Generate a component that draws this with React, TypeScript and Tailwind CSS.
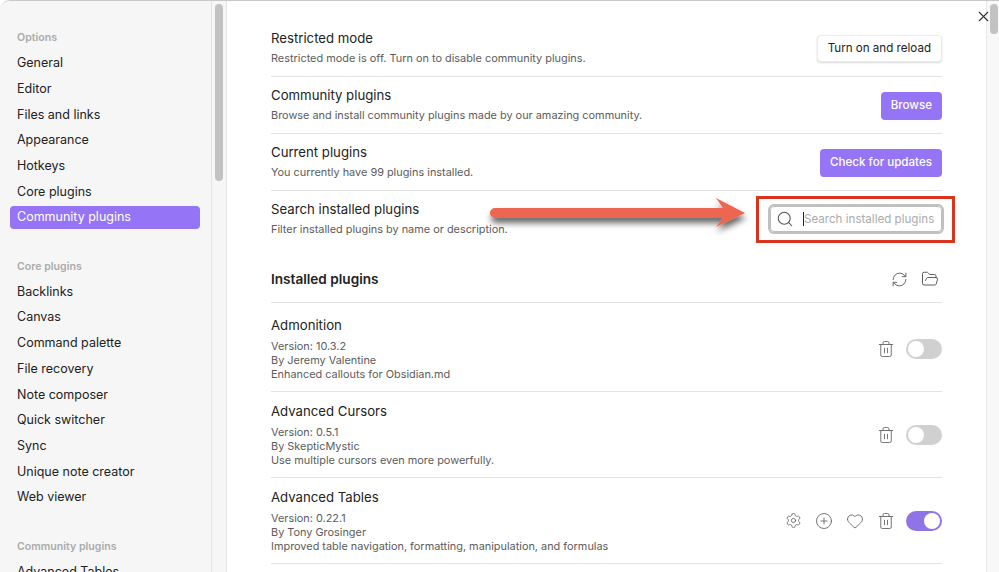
import React from 'react';
import { X, Search, RefreshCw, FolderOpen, Trash2, Settings, CirclePlus, Heart } from 'lucide-react';

const navGroups = [
  { title: 'Options', items: ['General', 'Editor', 'Files and links', 'Appearance', 'Hotkeys', 'Core plugins', 'Community plugins'] },
  { title: 'Core plugins', items: ['Backlinks', 'Canvas', 'Command palette', 'File recovery', 'Note composer', 'Quick switcher', 'Sync', 'Unique note creator', 'Web viewer'] },
  { title: 'Community plugins', items: ['Advanced Tables'] },
];

const plugins = [
  { name: 'Admonition', version: '10.3.2', author: 'Jeremy Valentine', desc: 'Enhanced callouts for Obsidian.md', on: false },
  { name: 'Advanced Cursors', version: '0.5.1', author: 'SkepticMystic', desc: 'Use multiple cursors even more powerfully.', on: false },
  { name: 'Advanced Tables', version: '0.22.1', author: 'Tony Grosinger', desc: 'Improved table navigation, formatting, manipulation, and formulas', on: true },
];

const Toggle = ({ on }: { on: boolean }) => (
  <div className={`w-[36px] h-[20px] rounded-full flex items-center px-[2px] ${on ? 'bg-[#8f74e8] justify-end' : 'bg-[#d0d0d0] justify-start'}`}>
    <div className="w-[16px] h-[16px] rounded-full bg-white" />
  </div>
);

const SettingRow = ({ title, desc, children }: { title: string; desc: string; children: React.ReactNode }) => (
  <div className="h-[57px] border-b border-[#e3e3e3] flex items-center justify-between">
    <div className="mb-[2px]">
      <div className="text-[13.2px] leading-[20px] text-[#222]">{title}</div>
      <div className="text-[10.9px] leading-[16px] mt-[2px] text-[#5c5c5c]">{desc}</div>
    </div>
    {children}
  </div>
);

const PurpleButton = ({ label }: { label: string }) => (
  <button className="h-[28px] mt-[1px] pt-[1px] px-[10px] rounded-[4px] bg-[#9575f5] text-white text-[11.6px] font-medium">{label}</button>
);

export default function App() {
  return (
    <div className="relative flex w-[999px] h-[572px] overflow-hidden bg-white border-t border-[#c8c8c8] rounded-tl-[10px] text-[#222] font-['Inter','Liberation_Sans',sans-serif]">
      {/* sidebar */}
      <div className="w-[212px] shrink-0 bg-[#f6f6f6] border-r border-[#e3e3e3] pt-[27px] pl-[10px] pr-[11px]">
        {navGroups.map((g) => (
          <div key={g.title} className="mb-[27.5px]">
            <div className="h-[20px] pl-[7px] flex items-center text-[10.6px] font-semibold text-[#ababab]">{g.title}</div>
            <div className="mt-[4px]">
              {g.items.map((it) => (
                <div
                  key={it}
                  className={`h-[23px] mb-[2.7px] pl-[7px] flex items-center rounded-[4px] text-[12.5px] ${it === 'Community plugins' && g.title === 'Options' ? 'bg-[#9575f5] text-white' : 'text-[#222]'}`}
                >
                  {it}
                </div>
              ))}
            </div>
          </div>
        ))}
      </div>
      {/* sidebar scrollbar */}
      <div className="w-[15px] shrink-0 bg-[#f6f6f6] border-r border-[#e3e3e3] pl-[3px] pt-[3px]">
        <div className="w-[8px] h-[177px] rounded-full bg-[#c2c2c2]" />
      </div>

      {/* main */}
      <div className="flex-1 pl-[44px] pr-[44px] pt-[19px]">
        <SettingRow title="Restricted mode" desc="Restricted mode is off. Turn on to disable community plugins.">
          <button className="h-[27px] pt-[1px] px-[10px] rounded-[4px] bg-white border border-[#ececec] shadow-[0_1px_2px_rgba(0,0,0,0.15)] text-[11.6px] text-[#222]">Turn on and reload</button>
        </SettingRow>
        <SettingRow title="Community plugins" desc="Browse and install community plugins made by our amazing community.">
          <PurpleButton label="Browse" />
        </SettingRow>
        <SettingRow title="Current plugins" desc="You currently have 99 plugins installed.">
          <PurpleButton label="Check for updates" />
        </SettingRow>
        <div className="h-[56px] flex items-center justify-between">
          <div className="mb-[2px]">
            <div className="text-[13.2px] leading-[20px]">Search installed plugins</div>
            <div className="text-[10.9px] leading-[16px] mt-[2px] text-[#5c5c5c]">Filter installed plugins by name or description.</div>
          </div>
          <div className="w-[172px] h-[26px] rounded-[4px] border border-[#bdbdbd] shadow-[0_0_0_2px_#c0c0c0] flex items-center pl-[5px]">
            <Search size={18} strokeWidth={1.4} className="text-[#555]" />
            <div className="ml-[9px] w-px h-[14px] bg-[#222]" />
            <span className="pt-[1px] text-[11.6px] text-[#ababab]">Search installed plugins</span>
          </div>
        </div>

        <div className="h-[56px] pt-[9px] border-b border-[#e3e3e3] flex items-center justify-between">
          <div className="text-[13.6px] font-semibold">Installed plugins</div>
          <div className="flex items-center gap-[13.5px] pr-[3px] text-[#5c5c5c]">
            <RefreshCw size={17} strokeWidth={1.3} />
            <FolderOpen size={18} strokeWidth={1.3} />
          </div>
        </div>

        {plugins.map((p, i) => (
          <div key={p.name} className={`border-b border-[#e3e3e3] flex items-center justify-between ${i === 0 ? 'h-[89px] pt-[3px]' : 'h-[86px]'}`}>
            <div>
              <div className="text-[13.2px] leading-[20px]">{p.name}</div>
              <div className="mt-[3.5px] text-[10.9px] leading-[14.3px] text-[#5c5c5c]">
                <div>Version: {p.version}</div>
                <div>By {p.author}</div>
                <div>{p.desc}</div>
              </div>
            </div>
            <div className="flex items-center text-[#666]">
              {p.on && (
                <>
                  <Settings size={17} strokeWidth={1.2} />
                  <CirclePlus size={18} strokeWidth={1.2} className="ml-[13.5px]" />
                  <Heart size={18} strokeWidth={1.2} className="ml-[13px]" />
                </>
              )}
              <Trash2 size={18} strokeWidth={1.2} className="ml-[13px]" />
              <div className="ml-[11px]">
                <Toggle on={p.on} />
              </div>
            </div>
          </div>
        ))}
      </div>

      {/* main scrollbar */}
      <div className="w-[13px] shrink-0 bg-[#f8f8f8] border-l border-[#e8e8e8] pl-[3px] pt-[3px]">
        <div className="w-[8px] h-[30px] rounded-full bg-[#c2c2c2]" />
      </div>

      {/* close */}
      <X size={17} strokeWidth={1.6} className="absolute left-[975px] top-[7px] text-[#333]" />

      {/* annotation */}
      <div className="absolute left-[756px] top-[195px] w-[199px] h-[47px] border-[3px] border-[#d8351c]" />
      <svg className="absolute left-[485px] top-[189px]" width="270" height="55" viewBox="0 0 270 55" fill="none">
        <defs>
          <filter id="arrowShadow" x="-10%" y="-50%" width="120%" height="220%">
            <feDropShadow dx="1" dy="5" stdDeviation="3" floodColor="#000" floodOpacity="0.6" />
          </filter>
        </defs>
        <path d="M10 18 H238 L231 8 L260 23 L231 37 L238 28 H10 A5 5 0 0 1 10 18 Z" fill="#ec6651" filter="url(#arrowShadow)" />
      </svg>
    </div>
  );
}
